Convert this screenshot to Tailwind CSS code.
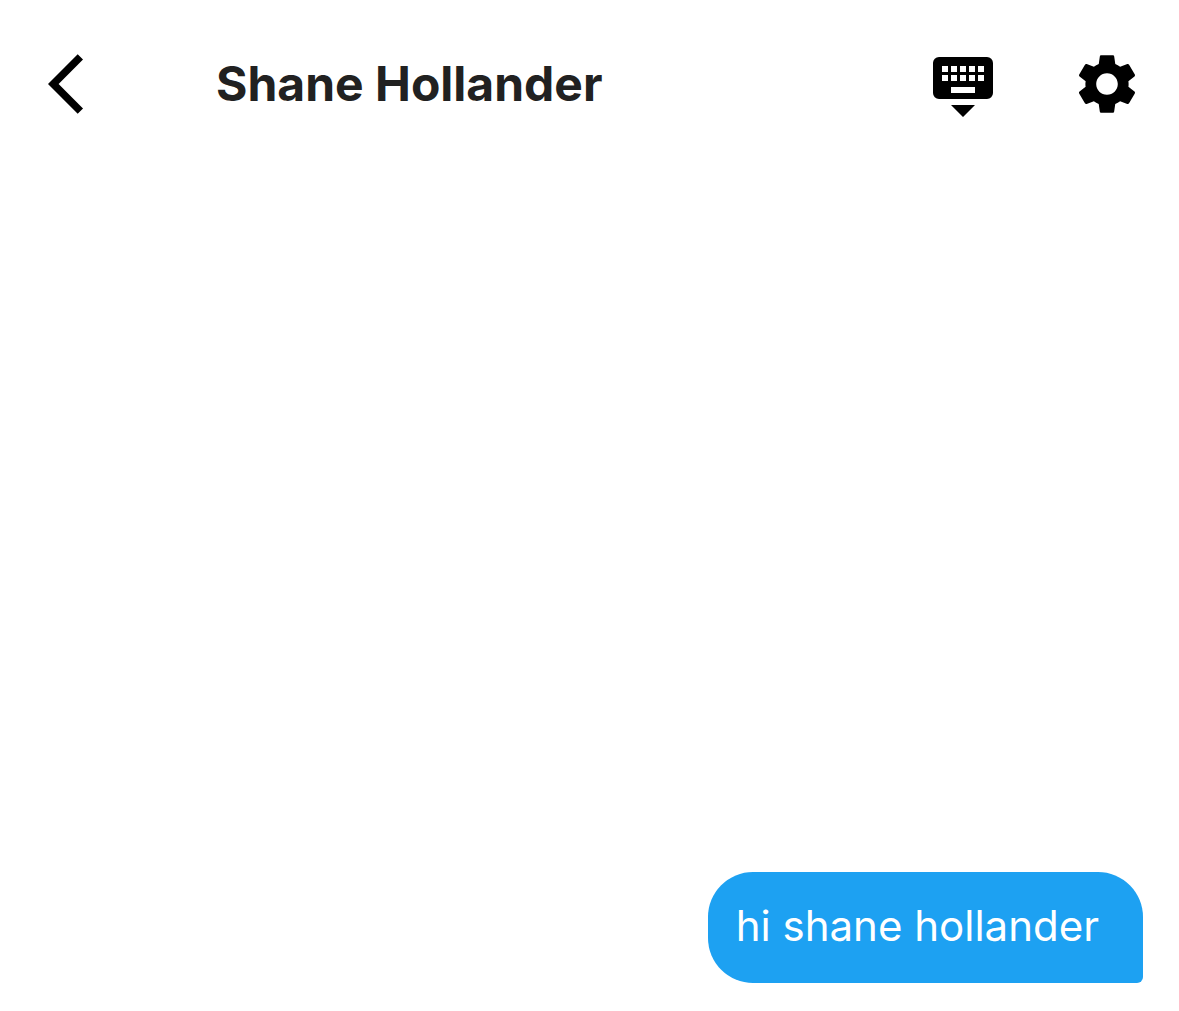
<!DOCTYPE html>
<html lang="en">
<head>
<meta charset="utf-8">
<meta name="viewport" content="width=device-width, initial-scale=1">
<title>Shane Hollander</title>
<script src="https://cdn.jsdelivr.net/npm/@tailwindcss/browser@4"></script>
</head>
<body class="flex min-h-screen flex-col bg-white font-['Inter',sans-serif] text-black">
  <header class="flex h-42 items-center pr-9 pl-12">
    <button type="button" aria-label="Back" class="size-18 shrink-0">
      <svg viewBox="0 0 24 24" class="size-18" fill="currentColor" aria-hidden="true"><path d="M11.67 3.87 9.9 2.1 0 12l9.9 9.9 1.77-1.77L3.54 12z"/></svg>
    </button>
    <h1 class="ml-24 flex-1 text-5xl font-bold text-[#212121]">Shane Hollander</h1>
    <div class="flex gap-18">
      <button type="button" aria-label="Hide keyboard" class="size-18">
        <svg viewBox="0 0 24 24" class="size-18" fill="currentColor" fill-rule="evenodd" aria-hidden="true"><path d="M20 3H4a2 2 0 0 0-2 2v10a2 2 0 0 0 2 2h16a2 2 0 0 0 2-2V5a2 2 0 0 0-2-2zM5 6h2v2H5zM8 6h2v2H8zM11 6h2v2h-2zM14 6h2v2h-2zM17 6h2v2h-2zM5 9h2v2H5zM8 9h2v2H8zM11 9h2v2h-2zM14 9h2v2h-2zM17 9h2v2h-2zM8 13h8v2H8zM12 23l4-4H8z"/></svg>
      </button>
      <button type="button" aria-label="Settings" class="size-18">
        <svg viewBox="0 0 24 24" class="size-18" fill="currentColor" aria-hidden="true"><path d="M19.14 12.94c.04-.3.06-.61.06-.94 0-.32-.02-.64-.07-.94l2.03-1.58c.18-.14.23-.41.12-.61l-1.92-3.32c-.12-.22-.37-.29-.59-.22l-2.39.96c-.5-.38-1.03-.7-1.62-.94l-.36-2.54c-.04-.24-.24-.41-.48-.41h-3.84c-.24 0-.43.17-.47.41l-.36 2.54c-.59.24-1.13.57-1.62.94l-2.39-.96c-.22-.08-.47 0-.59.22L2.74 8.87c-.12.21-.08.47.12.61l2.03 1.58c-.05.3-.09.63-.09.94s.02.64.07.94l-2.03 1.58c-.18.14-.23.41-.12.61l1.92 3.32c.12.22.37.29.59.22l2.39-.96c.5.38 1.03.7 1.62.94l.36 2.54c.05.24.24.41.48.41h3.84c.24 0 .44-.17.47-.41l.36-2.54c.59-.24 1.13-.56 1.62-.94l2.39.96c.22.08.47 0 .59-.22l1.92-3.32c.12-.22.07-.47-.12-.61l-2.01-1.58zM12 15.6c-1.98 0-3.6-1.62-3.6-3.6s1.62-3.6 3.6-3.6 3.6 1.62 3.6 3.6-1.62 3.6-3.6 3.6z"/></svg>
      </button>
    </div>
  </header>
  <main class="flex flex-1 flex-col items-end justify-end px-9 pb-7">
    <p class="rounded-[45px] rounded-br-md bg-[#1da1f2] pt-[26px] pr-11 pb-[30px] pl-7 text-[42px] leading-[55px] text-white">hi shane hollander</p>
  </main>
</body>
</html>
